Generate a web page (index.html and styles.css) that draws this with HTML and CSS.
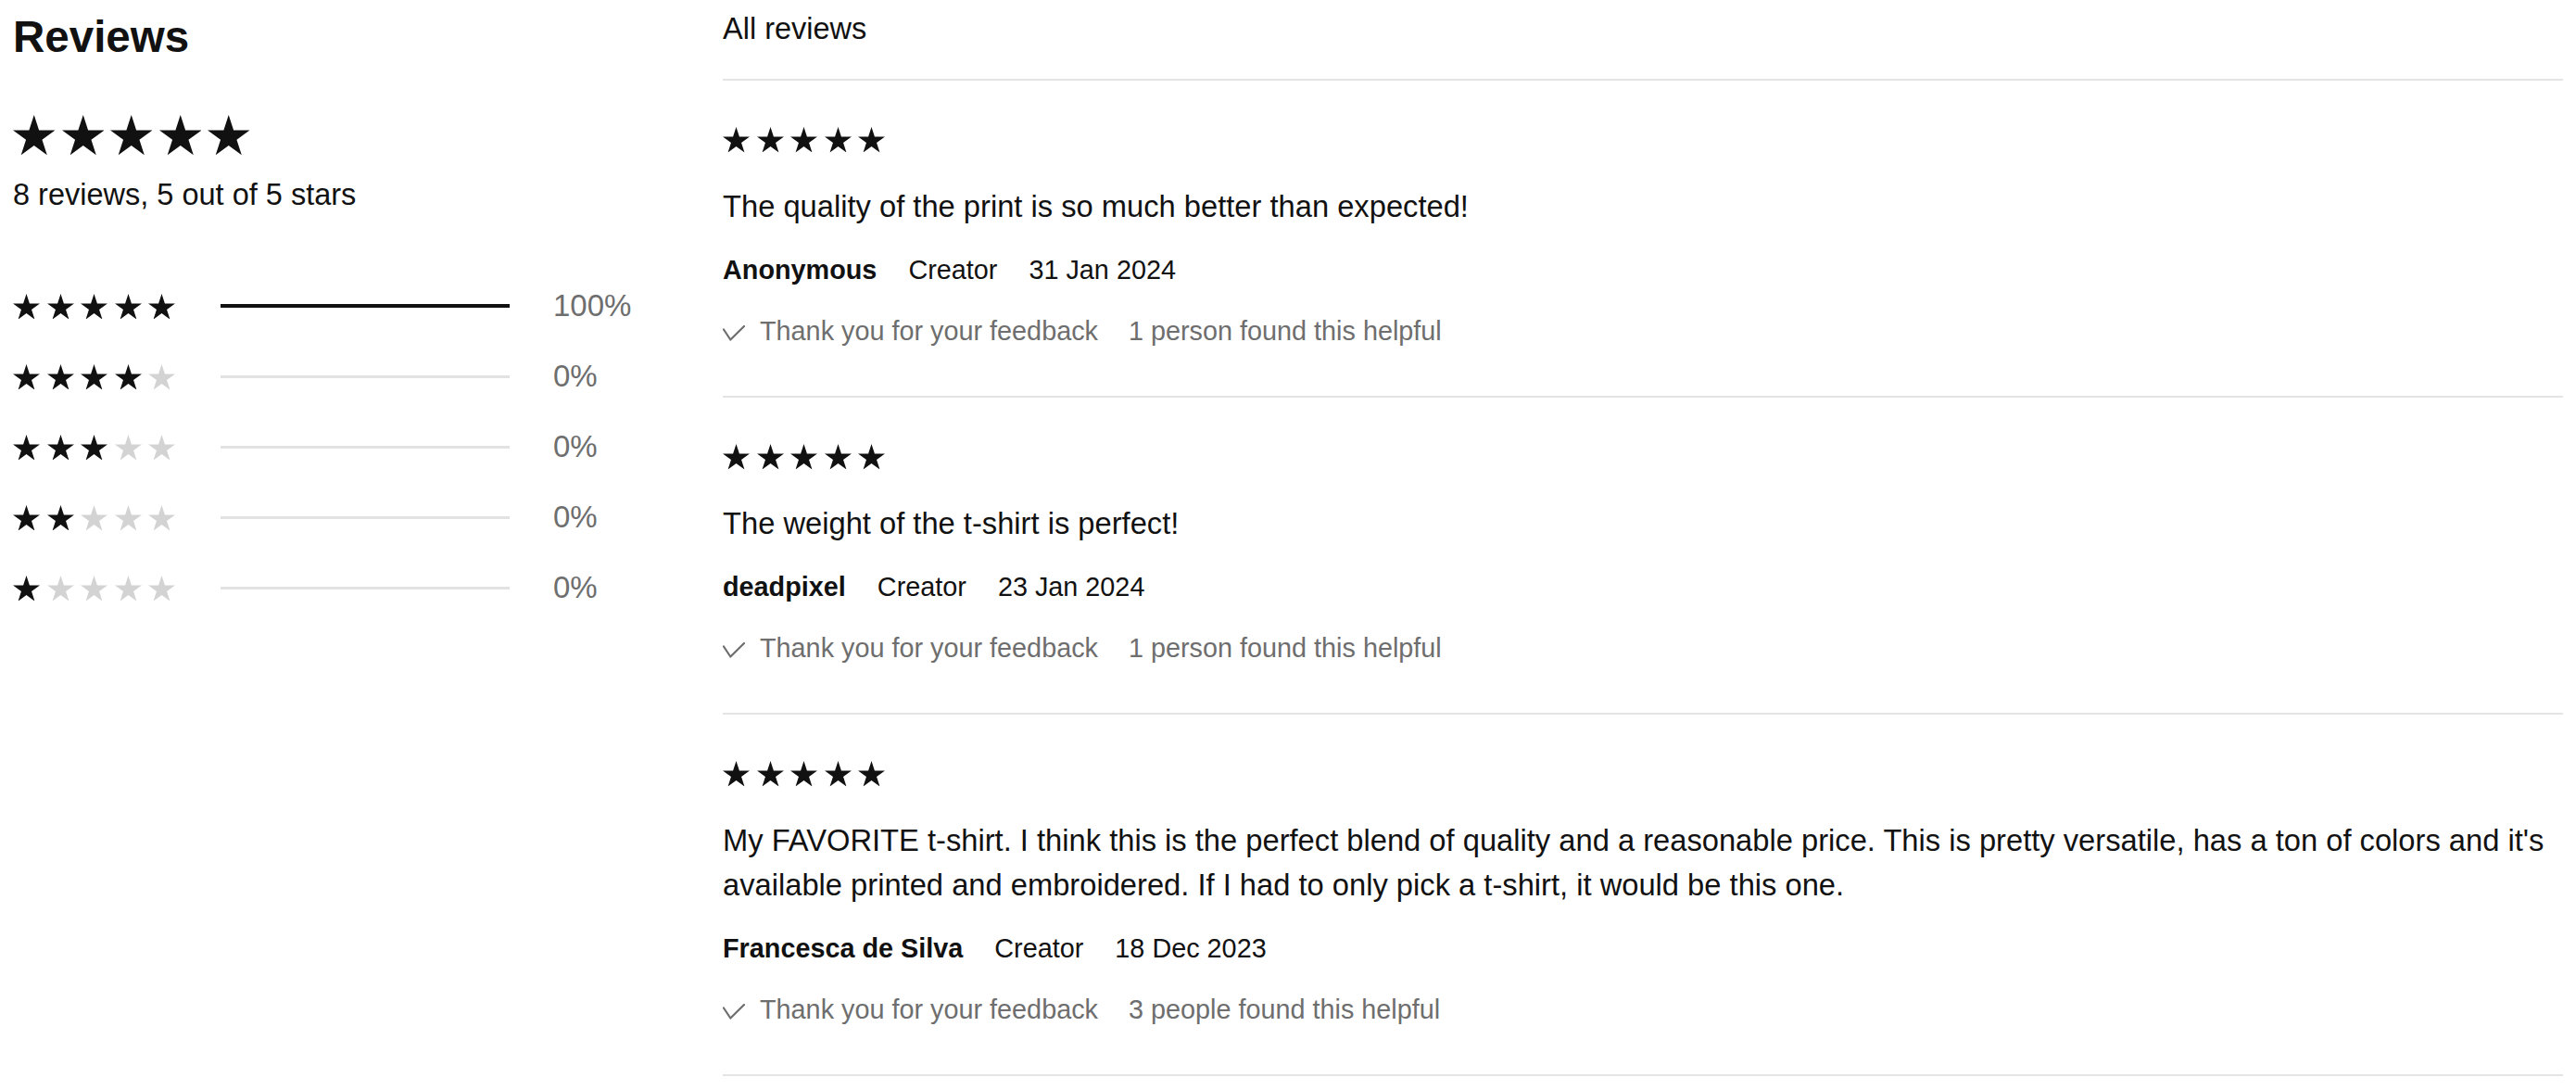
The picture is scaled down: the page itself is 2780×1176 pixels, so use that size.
FILE: index.html
```html
<!DOCTYPE html>
<html lang="en">
<head>
<meta charset="utf-8">
<title>Reviews</title>
<link rel="stylesheet" href="styles.css">
</head>
<body>
<svg class="defs" aria-hidden="true">
  <symbol id="star" viewBox="0 0 190.2 180.9">
    <polygon points="95.1,0 117.55,69.1 190.2,69.1 131.43,111.8 153.88,180.9 95.1,138.2 36.32,180.9 58.77,111.8 0,69.1 72.65,69.1"/>
  </symbol>
  <symbol id="check" viewBox="0 0 24 17">
    <path d="M1 4.5 L8.3 15.5 L23 1" fill="none" stroke="currentColor" stroke-width="2.2" stroke-linecap="round" stroke-linejoin="round"/>
  </symbol>
</svg>

<div class="page">
  <aside class="summary">
    <h1 class="summary__title">Reviews</h1>
    <div class="stars stars--lg">
      <svg class="star"><use href="#star"/></svg>
      <svg class="star"><use href="#star"/></svg>
      <svg class="star"><use href="#star"/></svg>
      <svg class="star"><use href="#star"/></svg>
      <svg class="star"><use href="#star"/></svg>
    </div>
    <p class="summary__count">8 reviews, 5 out of 5 stars</p>

    <ul class="dist">
      <li class="dist__row">
        <div class="stars">
          <svg class="star"><use href="#star"/></svg><svg class="star"><use href="#star"/></svg><svg class="star"><use href="#star"/></svg><svg class="star"><use href="#star"/></svg><svg class="star"><use href="#star"/></svg>
        </div>
        <div class="dist__bar"><div class="dist__fill" style="width:100%"></div></div>
        <span class="dist__pct">100%</span>
      </li>
      <li class="dist__row">
        <div class="stars">
          <svg class="star"><use href="#star"/></svg><svg class="star"><use href="#star"/></svg><svg class="star"><use href="#star"/></svg><svg class="star"><use href="#star"/></svg><svg class="star off"><use href="#star"/></svg>
        </div>
        <div class="dist__bar"><div class="dist__fill" style="width:0%"></div></div>
        <span class="dist__pct">0%</span>
      </li>
      <li class="dist__row">
        <div class="stars">
          <svg class="star"><use href="#star"/></svg><svg class="star"><use href="#star"/></svg><svg class="star"><use href="#star"/></svg><svg class="star off"><use href="#star"/></svg><svg class="star off"><use href="#star"/></svg>
        </div>
        <div class="dist__bar"><div class="dist__fill" style="width:0%"></div></div>
        <span class="dist__pct">0%</span>
      </li>
      <li class="dist__row">
        <div class="stars">
          <svg class="star"><use href="#star"/></svg><svg class="star"><use href="#star"/></svg><svg class="star off"><use href="#star"/></svg><svg class="star off"><use href="#star"/></svg><svg class="star off"><use href="#star"/></svg>
        </div>
        <div class="dist__bar"><div class="dist__fill" style="width:0%"></div></div>
        <span class="dist__pct">0%</span>
      </li>
      <li class="dist__row">
        <div class="stars">
          <svg class="star"><use href="#star"/></svg><svg class="star off"><use href="#star"/></svg><svg class="star off"><use href="#star"/></svg><svg class="star off"><use href="#star"/></svg><svg class="star off"><use href="#star"/></svg>
        </div>
        <div class="dist__bar"><div class="dist__fill" style="width:0%"></div></div>
        <span class="dist__pct">0%</span>
      </li>
    </ul>
  </aside>

  <main class="reviews">
    <div class="reviews__tab">All reviews</div>

    <article class="review">
      <div class="stars">
        <svg class="star"><use href="#star"/></svg><svg class="star"><use href="#star"/></svg><svg class="star"><use href="#star"/></svg><svg class="star"><use href="#star"/></svg><svg class="star"><use href="#star"/></svg>
      </div>
      <p class="review__body">The quality of the print is so much better than expected!</p>
      <div class="review__meta">
        <span class="review__author">Anonymous</span>
        <span>Creator</span>
        <span>31 Jan 2024</span>
      </div>
      <div class="review__helpful">
        <span class="review__thanks"><svg class="check"><use href="#check"/></svg>Thank you for your feedback</span>
        <span>1 person found this helpful</span>
      </div>
    </article>

    <article class="review">
      <div class="stars">
        <svg class="star"><use href="#star"/></svg><svg class="star"><use href="#star"/></svg><svg class="star"><use href="#star"/></svg><svg class="star"><use href="#star"/></svg><svg class="star"><use href="#star"/></svg>
      </div>
      <p class="review__body">The weight of the t-shirt is perfect!</p>
      <div class="review__meta">
        <span class="review__author">deadpixel</span>
        <span>Creator</span>
        <span>23 Jan 2024</span>
      </div>
      <div class="review__helpful">
        <span class="review__thanks"><svg class="check"><use href="#check"/></svg>Thank you for your feedback</span>
        <span>1 person found this helpful</span>
      </div>
    </article>

    <article class="review">
      <div class="stars">
        <svg class="star"><use href="#star"/></svg><svg class="star"><use href="#star"/></svg><svg class="star"><use href="#star"/></svg><svg class="star"><use href="#star"/></svg><svg class="star"><use href="#star"/></svg>
      </div>
      <p class="review__body">My FAVORITE t-shirt. I think this is the perfect blend of quality and a reasonable price. This is pretty versatile, has a ton of colors and it's available printed and embroidered. If I had to only pick a t-shirt, it would be this one.</p>
      <div class="review__meta">
        <span class="review__author">Francesca de Silva</span>
        <span>Creator</span>
        <span>18 Dec 2023</span>
      </div>
      <div class="review__helpful">
        <span class="review__thanks"><svg class="check"><use href="#check"/></svg>Thank you for your feedback</span>
        <span>3 people found this helpful</span>
      </div>
    </article>
    <div class="reviews__end"></div>
  </main>
</div>
</body>
</html>
```

FILE: styles.css
```css
* { box-sizing: border-box; }

html, body {
  margin: 0;
  padding: 0;
  background: #ffffff;
}

body {
  font-family: "Liberation Sans", Arial, sans-serif;
  color: #111111;
}

.defs {
  position: absolute;
  width: 0;
  height: 0;
  overflow: hidden;
}

.page {
  display: grid;
  grid-template-columns: 686px 1fr;
  column-gap: 80px;
  padding: 11px 14px 0 14px;
}

/* ---------- stars ---------- */
.stars {
  display: flex;
  gap: 7.5px;
  align-items: center;
}

.star {
  width: 29px;
  height: 27.6px;
  fill: #111111;
  flex: none;
}

.star.off {
  fill: #d3d3d3;
}

.stars--lg {
  gap: 7px;
  margin-top: 55px;
}

.stars--lg .star {
  width: 45.5px;
  height: 43.3px;
}

/* ---------- summary column ---------- */
.summary__title {
  margin: 0;
  font-size: 47.5px;
  line-height: 58px;
  font-weight: 700;
}

.summary__count {
  margin: 23px 0 0;
  font-size: 32.5px;
  line-height: 40px;
}

.dist {
  list-style: none;
  margin: 80px 0 0;
  padding: 0;
  display: flex;
  flex-direction: column;
  gap: 36px;
}

.dist__row {
  display: grid;
  grid-template-columns: 175px 312px auto;
  column-gap: 49px;
  align-items: center;
  height: 40px;
}

.dist__bar {
  height: 3px;
  background: #e2e2e2;
}

.dist__fill {
  height: 4px;
  margin-top: -0.5px;
  background: #111111;
}

.dist__pct {
  margin-left: -2px;
  font-size: 33px;
  line-height: 40px;
  color: #6e6e6e;
}

/* ---------- reviews column ---------- */
.reviews__tab {
  font-size: 32.5px;
  line-height: 40px;
  margin-bottom: 34px;
}

.review {
  border-top: 2px solid #e4e4e4;
  padding: 50px 0 52px;
  display: flex;
  flex-direction: column;
}

.review .stars {
  margin-bottom: 34px;
  height: 28px;
}

.review__body {
  margin: 0 0 26px;
  font-size: 32.7px;
  line-height: 48px;
}

.review__meta {
  display: flex;
  gap: 34px;
  font-size: 28.8px;
  line-height: 36px;
  margin-bottom: 30px;
}

.review__author {
  font-weight: 700;
}

.review__helpful {
  display: flex;
  gap: 33px;
  font-size: 28.8px;
  line-height: 36px;
  color: #6e6e6e;
}

.review__thanks {
  display: flex;
  align-items: center;
  gap: 16px;
}

.check {
  width: 24px;
  height: 17px;
  color: #6e6e6e;
  flex: none;
  margin-top: 4px;
}

.reviews__end {
  border-top: 2px solid #e4e4e4;
}
```
